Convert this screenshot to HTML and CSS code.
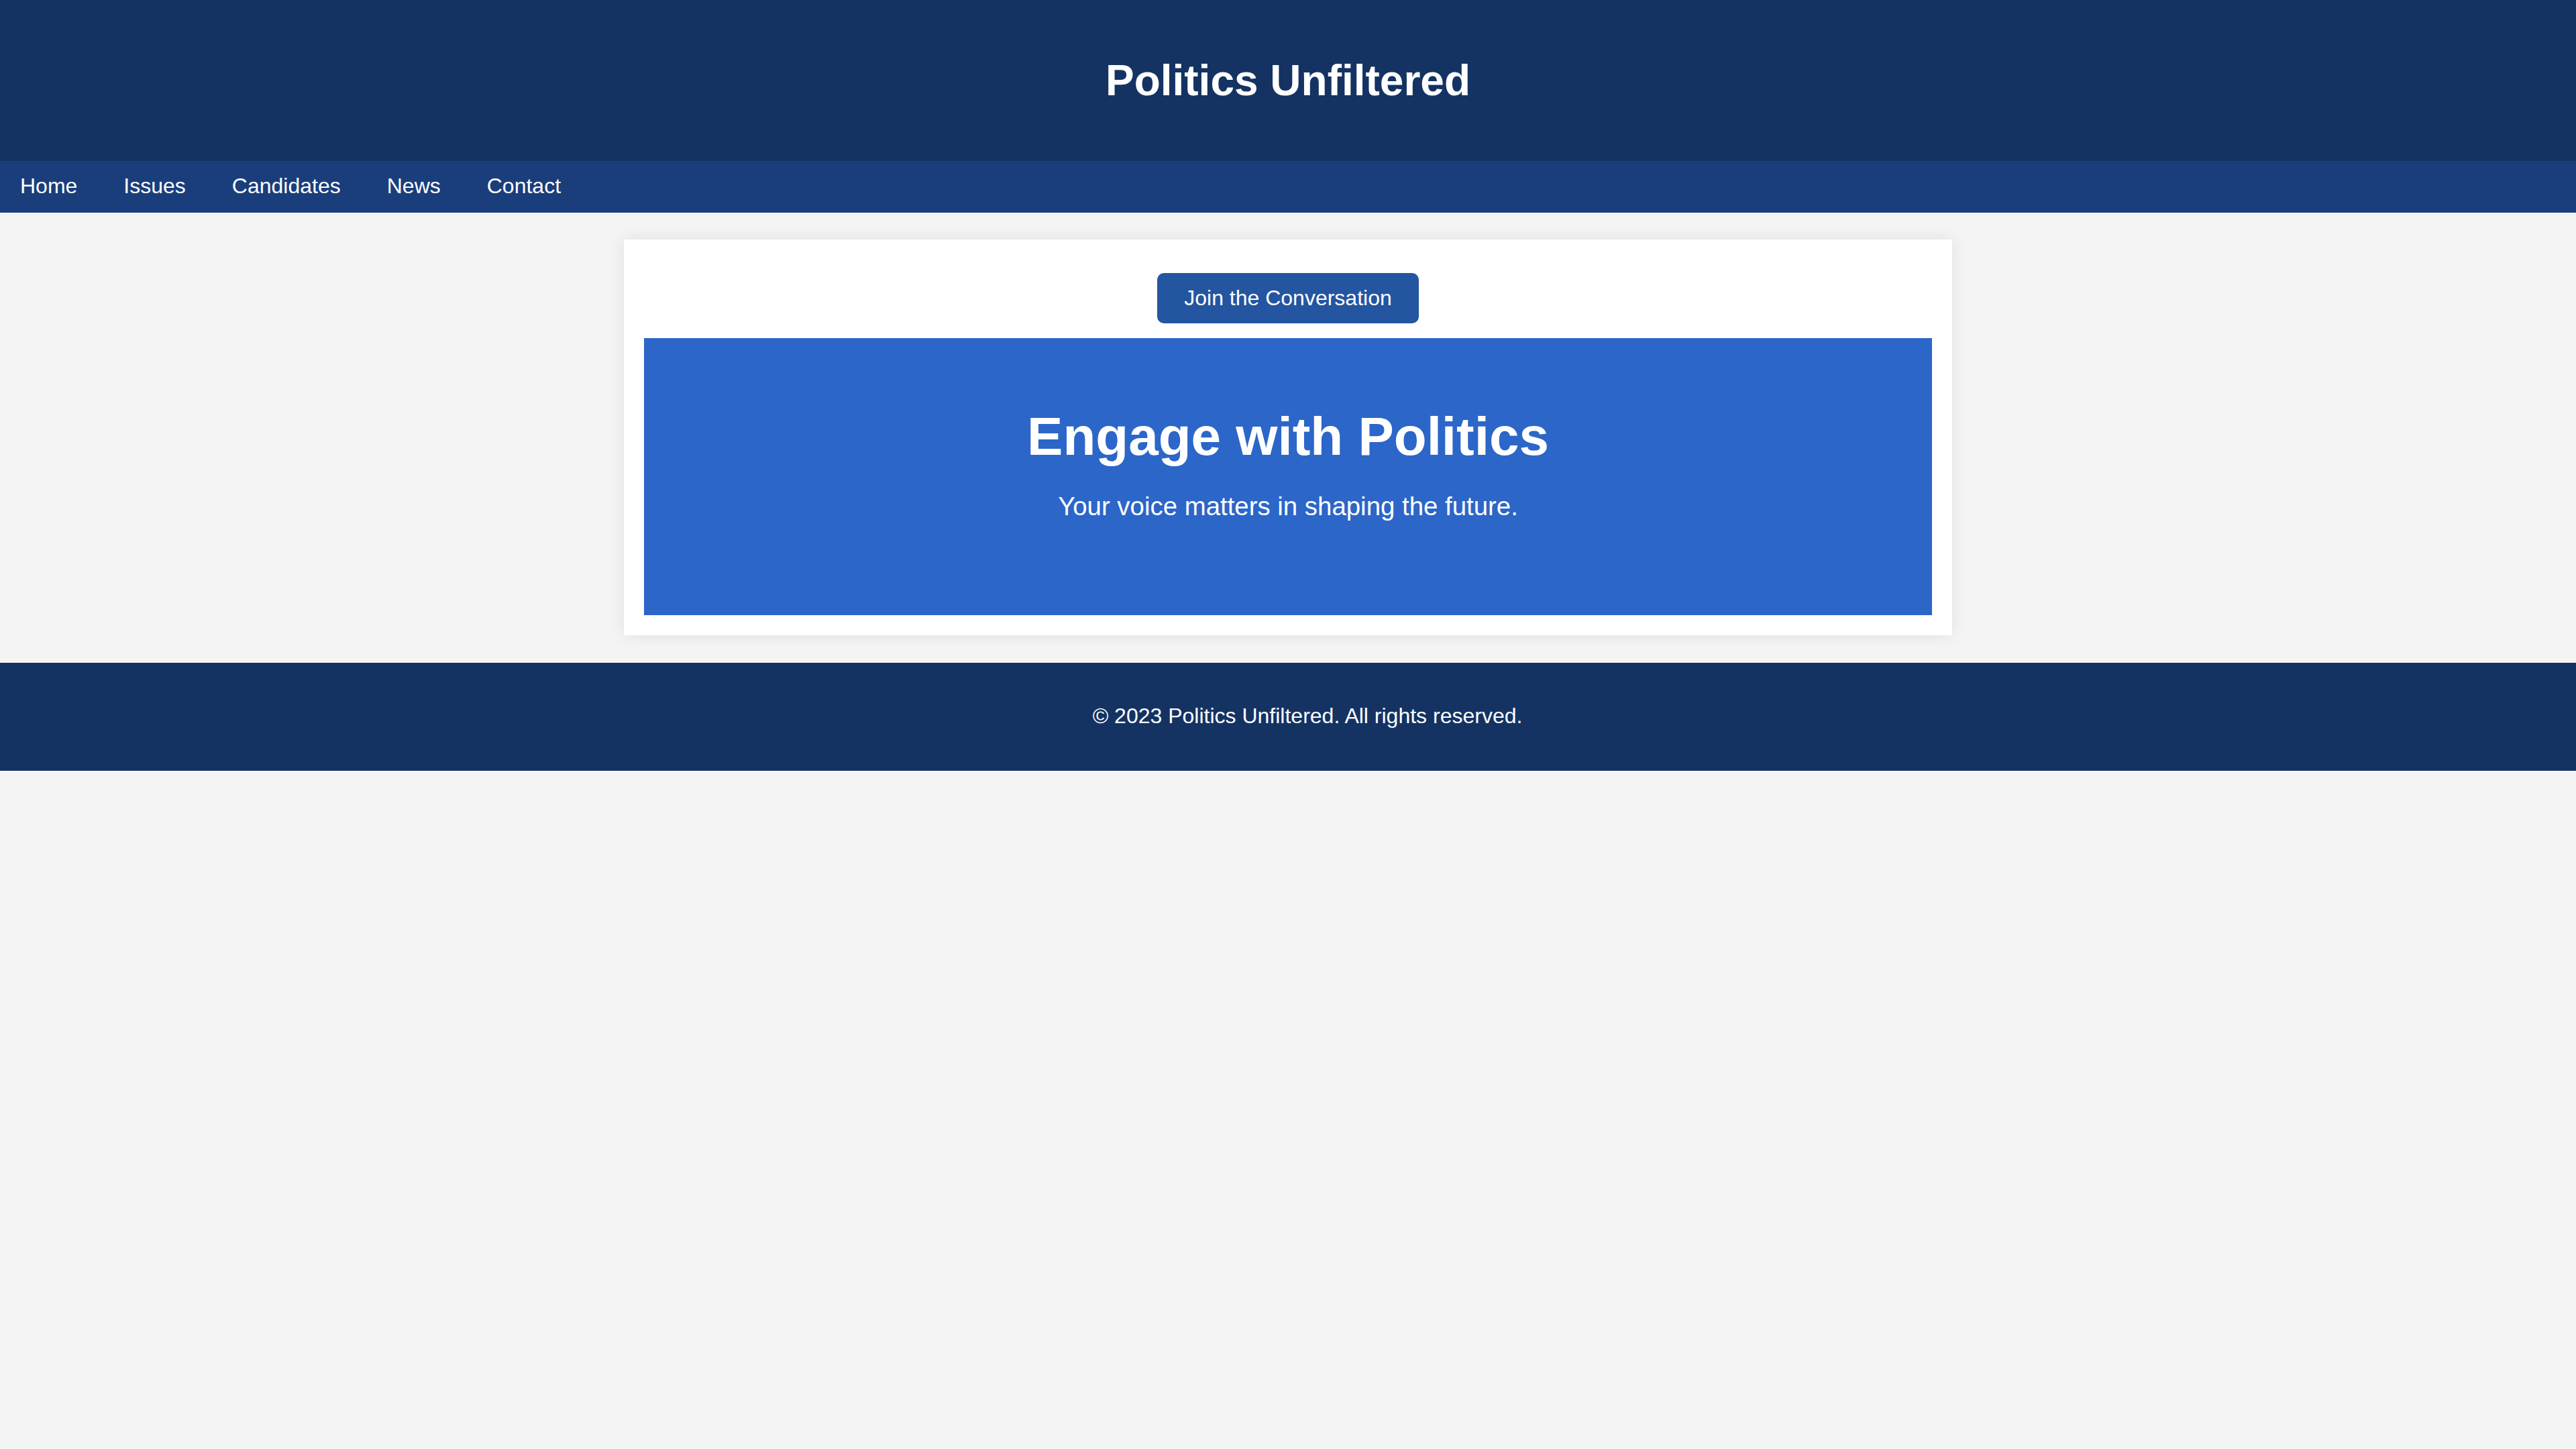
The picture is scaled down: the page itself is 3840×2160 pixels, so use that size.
FILE: index.html
```html
<!DOCTYPE html>
<html lang="en">
<head>
<meta charset="utf-8">
<title>Politics Unfiltered</title>
<link rel="stylesheet" href="styles.css">
</head>
<body>
<header class="site-header">
  <h1 class="site-title">Politics Unfiltered</h1>
</header>
<nav class="site-nav">
  <a class="nav-link" href="#">Home</a>
  <a class="nav-link" href="#">Issues</a>
  <a class="nav-link" href="#">Candidates</a>
  <a class="nav-link" href="#">News</a>
  <a class="nav-link" href="#">Contact</a>
</nav>
<main class="main">
  <section class="card">
    <button class="cta" type="button">Join the Conversation</button>
    <div class="hero">
      <h2 class="hero-title">Engage with Politics</h2>
      <p class="hero-sub">Your voice matters in shaping the future.</p>
    </div>
  </section>
</main>
<footer class="site-footer">
  <p class="footer-text">© 2023 Politics Unfiltered. All rights reserved.</p>
</footer>
</body>
</html>
```
FILE: styles.css
```css
* { box-sizing: border-box; }
html, body {
  margin: 0;
  padding: 0;
  background: #f4f4f4;
  font-family: "Liberation Sans", Arial, sans-serif;
  color: #ffffff;
}
.site-header {
  background: #143363;
  padding: 83px 0 83px;
  text-align: center;
}
.site-title {
  margin: 0;
  font-size: 64px;
  font-weight: 700;
  line-height: 74px;
}
.site-nav {
  background: #1a3e7c;
  display: flex;
  gap: 69px;
  padding: 0 0 0 30px;
  height: 77px;
}
.nav-link {
  color: #ffffff;
  text-decoration: none;
  font-size: 32px;
  line-height: 37px;
  padding-top: 19px;
}
.main {
  padding: 40px 0 41px;
  display: flex;
  justify-content: center;
}
.card {
  width: 1980px;
  background: #ffffff;
  padding: 50px 30px 30px;
  border-radius: 2px;
  box-shadow: 0 0 24px rgba(0, 0, 0, 0.09);
  display: flex;
  flex-direction: column;
  align-items: center;
}
.cta {
  background: #2455a0;
  color: #ffffff;
  border: 0;
  border-radius: 10px;
  font-family: "Liberation Sans", Arial, sans-serif;
  font-size: 32px;
  line-height: 37px;
  padding: 19px 40px;
  margin-bottom: 22px;
  cursor: pointer;
}
.hero {
  align-self: stretch;
  background: #2c66c8;
  padding: 101px 20px 140px;
  text-align: center;
}
.hero-title {
  margin: 0 0 36px;
  font-size: 80px;
  font-weight: 700;
  line-height: 92px;
}
.hero-sub {
  margin: 0;
  font-size: 38.4px;
  line-height: 44px;
}
.site-footer {
  background: #143363;
  padding: 61px 0 63px 58px;
  text-align: center;
}
.footer-text {
  margin: 0;
  font-size: 32px;
  line-height: 37px;
}
```
